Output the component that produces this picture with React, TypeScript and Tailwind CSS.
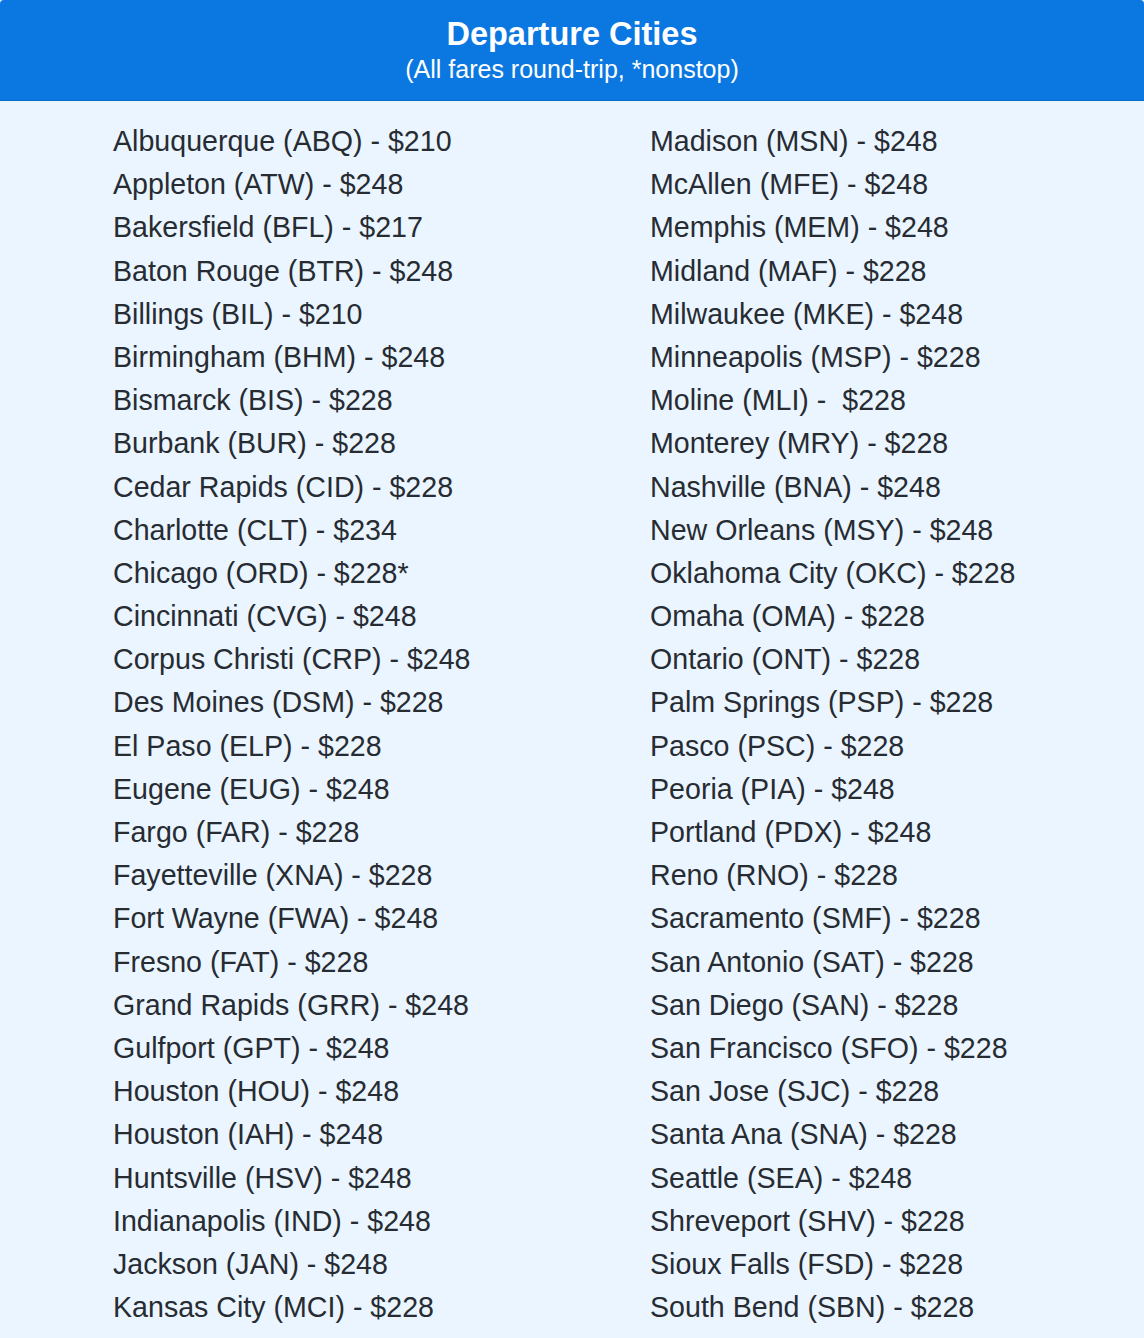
const left = [
  'Albuquerque (ABQ) - $210',
  'Appleton (ATW) - $248',
  'Bakersfield (BFL) - $217',
  'Baton Rouge (BTR) - $248',
  'Billings (BIL) - $210',
  'Birmingham (BHM) - $248',
  'Bismarck (BIS) - $228',
  'Burbank (BUR) - $228',
  'Cedar Rapids (CID) - $228',
  'Charlotte (CLT) - $234',
  'Chicago (ORD) - $228*',
  'Cincinnati (CVG) - $248',
  'Corpus Christi (CRP) - $248',
  'Des Moines (DSM) - $228',
  'El Paso (ELP) - $228',
  'Eugene (EUG) - $248',
  'Fargo (FAR) - $228',
  'Fayetteville (XNA) - $228',
  'Fort Wayne (FWA) - $248',
  'Fresno (FAT) - $228',
  'Grand Rapids (GRR) - $248',
  'Gulfport (GPT) - $248',
  'Houston (HOU) - $248',
  'Houston (IAH) - $248',
  'Huntsville (HSV) - $248',
  'Indianapolis (IND) - $248',
  'Jackson (JAN) - $248',
  'Kansas City (MCI) - $228',
];

const right = [
  'Madison (MSN) - $248',
  'McAllen (MFE) - $248',
  'Memphis (MEM) - $248',
  'Midland (MAF) - $228',
  'Milwaukee (MKE) - $248',
  'Minneapolis (MSP) - $228',
  'Moline (MLI) -  $228',
  'Monterey (MRY) - $228',
  'Nashville (BNA) - $248',
  'New Orleans (MSY) - $248',
  'Oklahoma City (OKC) - $228',
  'Omaha (OMA) - $228',
  'Ontario (ONT) - $228',
  'Palm Springs (PSP) - $228',
  'Pasco (PSC) - $228',
  'Peoria (PIA) - $248',
  'Portland (PDX) - $248',
  'Reno (RNO) - $228',
  'Sacramento (SMF) - $228',
  'San Antonio (SAT) - $228',
  'San Diego (SAN) - $228',
  'San Francisco (SFO) - $228',
  'San Jose (SJC) - $228',
  'Santa Ana (SNA) - $228',
  'Seattle (SEA) - $248',
  'Shreveport (SHV) - $228',
  'Sioux Falls (FSD) - $228',
  'South Bend (SBN) - $228',
];

function CityColumn({ items }: { items: string[] }) {
  return (
    <ul className="flex flex-col">
      {items.map((item) => (
        <li key={item} className="h-[43.2px] leading-[43.2px] text-[28.6px] whitespace-pre">
          {item}
        </li>
      ))}
    </ul>
  );
}

export default function App() {
  return (
    <div className="min-h-[1338px] bg-[#eaf5ff] font-['Liberation_Sans',Arial,sans-serif] text-[#272b32]">
      <header className="h-[101px] bg-[#0b78e1] border-b border-[#0a6cc9] rounded-t-[4px] flex flex-col items-center pt-[15px] text-white">
        <h1 className="text-[32.5px] font-bold leading-[38px]">Departure Cities</h1>
        <p className="text-[25px] leading-[28px] mt-[2px]">(All fares round-trip, *nonstop)</p>
      </header>
      <main className="grid grid-cols-[537px_1fr] pl-[113px] pt-[19px]">
        <CityColumn items={left} />
        <CityColumn items={right} />
      </main>
    </div>
  );
}
